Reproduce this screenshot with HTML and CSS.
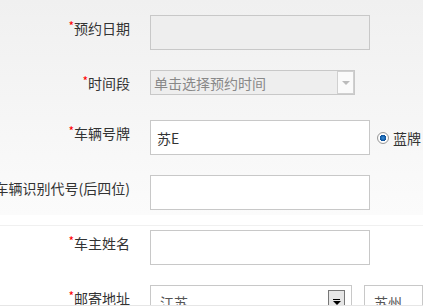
FILE: index.html
```html
<!DOCTYPE html>
<html lang="zh-CN">
<head>
    <meta charset="UTF-8">
    <title>预约登记</title>
    <link rel="stylesheet" href="styles.css">
</head>
<body>
    <div class="form-top">
        <div class="row">
            <label class="label"><span class="req">*</span><span>预约日期</span></label>
            <input class="text readonly" type="text" readonly>
        </div>
        <div class="row row-short">
            <label class="label"><span class="req">*</span><span>时间段</span></label>
            <div class="select disabled">
                <span class="select-text">单击选择预约时间</span>
                <span class="select-btn light"><span class="arrow"></span></span>
            </div>
        </div>
        <div class="row">
            <label class="label"><span class="req">*</span><span>车辆号牌</span></label>
            <input class="text" type="text" value="苏E">
            <label class="radio"><span class="dot"></span>蓝牌</label>
        </div>
        <div class="row">
            <label class="label"><span>车辆识别代号(后四位)</span></label>
            <input class="text" type="text">
        </div>
    </div>

    <div class="form-bottom">
        <div class="row">
            <label class="label"><span class="req">*</span><span>车主姓名</span></label>
            <input class="text" type="text">
        </div>
        <div class="row">
            <label class="label"><span class="req">*</span><span>邮寄地址</span></label>
            <div class="select province">
                <span class="select-text">江苏</span>
                <span class="select-btn dark"><span class="bar"></span><span class="arrow"></span></span>
            </div>
            <div class="select city">
                <span class="select-text">苏州</span>
            </div>
        </div>
    </div>

    <div class="bottom-edge"></div>
</body>
</html>
```

FILE: styles.css
```css
body {
    margin: 0;
    font-family: 'Noto Sans CJK SC', 'Liberation Sans', sans-serif;
    font-size: 14px;
    color: #333;
    background: #fff;
    overflow: hidden;
}
.form-top {
    background: linear-gradient(#f0f0f0, #fbfbfb);
    padding: 15px 0 5px;
}
.form-bottom {
    margin-top: 10px;
    border-top: 1px solid #f0f0f0;
    padding-top: 4px;
}
.row {
    display: flex;
    align-items: flex-start;
    height: 35px;
    margin-bottom: 20px;
}
.form-top .row:last-child {
    margin-bottom: 0;
}
.row-short {
    height: 30px;
}
.label {
    display: flex;
    justify-content: flex-end;
    align-items: flex-start;
    flex: 0 0 130px;
    width: 130px;
    min-width: 0;
    margin-right: 20px;
    line-height: 27px;
    white-space: nowrap;
}
.req {
    color: #f00;
    font-size: 12px;
    line-height: 22px;
}
.text {
    box-sizing: border-box;
    width: 220px;
    height: 35px;
    margin: 0;
    padding: 0 6px;
    border: 1px solid #c8c8c8;
    background: #fff;
    font: inherit;
    color: #333;
    outline: none;
}
.readonly {
    background: #eee;
}
.select {
    box-sizing: border-box;
    display: flex;
    align-items: center;
    height: 25px;
    border: 1px solid #c8c8c8;
    background: #fff;
    position: relative;
}
.select.disabled {
    width: 205px;
    background: #eee;
    color: #888;
}
.select-text {
    flex: 1;
    padding-left: 3px;
}
.select-btn {
    box-sizing: border-box;
    display: flex;
    flex-direction: column;
    align-items: center;
    justify-content: center;
    width: 17px;
}
.select-btn.light {
    height: 23px;
    border: 1px solid #d0d0d0;
    background: #fafafa;
}
.select-btn.light .arrow {
    border-top: 4px solid #bbb;
}
.select-btn.dark {
    height: 21px;
    margin-right: 6px;
    margin-top: 4px;
    align-self: flex-start;
    justify-content: flex-start;
    padding-top: 8px;
    border: 1px solid #777;
    background: #e6e6e6;
}
.select-btn.dark .bar {
    width: 7px;
    height: 1px;
    background: #000;
    margin-bottom: 1px;
}
.select-btn.dark .arrow {
    border-top: 4px solid #000;
}
.arrow {
    width: 0;
    height: 0;
    border-left: 4px solid transparent;
    border-right: 4px solid transparent;
}
.province {
    width: 206px;
    height: 35px;
    align-items: flex-start;
}
.province .select-text,
.city .select-text {
    padding-left: 9px;
    line-height: 33px;
    color: #555;
}
.city {
    width: 60px;
    height: 35px;
    margin-left: 12px;
    align-items: flex-start;
}
.radio {
    display: flex;
    align-items: center;
    margin-left: 7px;
    margin-top: 10px;
    line-height: 16px;
    white-space: nowrap;
}
.dot {
    box-sizing: border-box;
    width: 12px;
    height: 12px;
    margin-right: 4px;
    border-radius: 50%;
    border: 1px solid #999;
    background: radial-gradient(circle, #3a8fd8 0, #0a4f9a 3px, #fff 3.5px, #eee 6px);
}
.bottom-edge {
    position: fixed;
    left: 0;
    right: 0;
    bottom: 0;
    height: 1px;
    border-top: 1px solid #e6e6e6;
    background: #fff;
}
```
